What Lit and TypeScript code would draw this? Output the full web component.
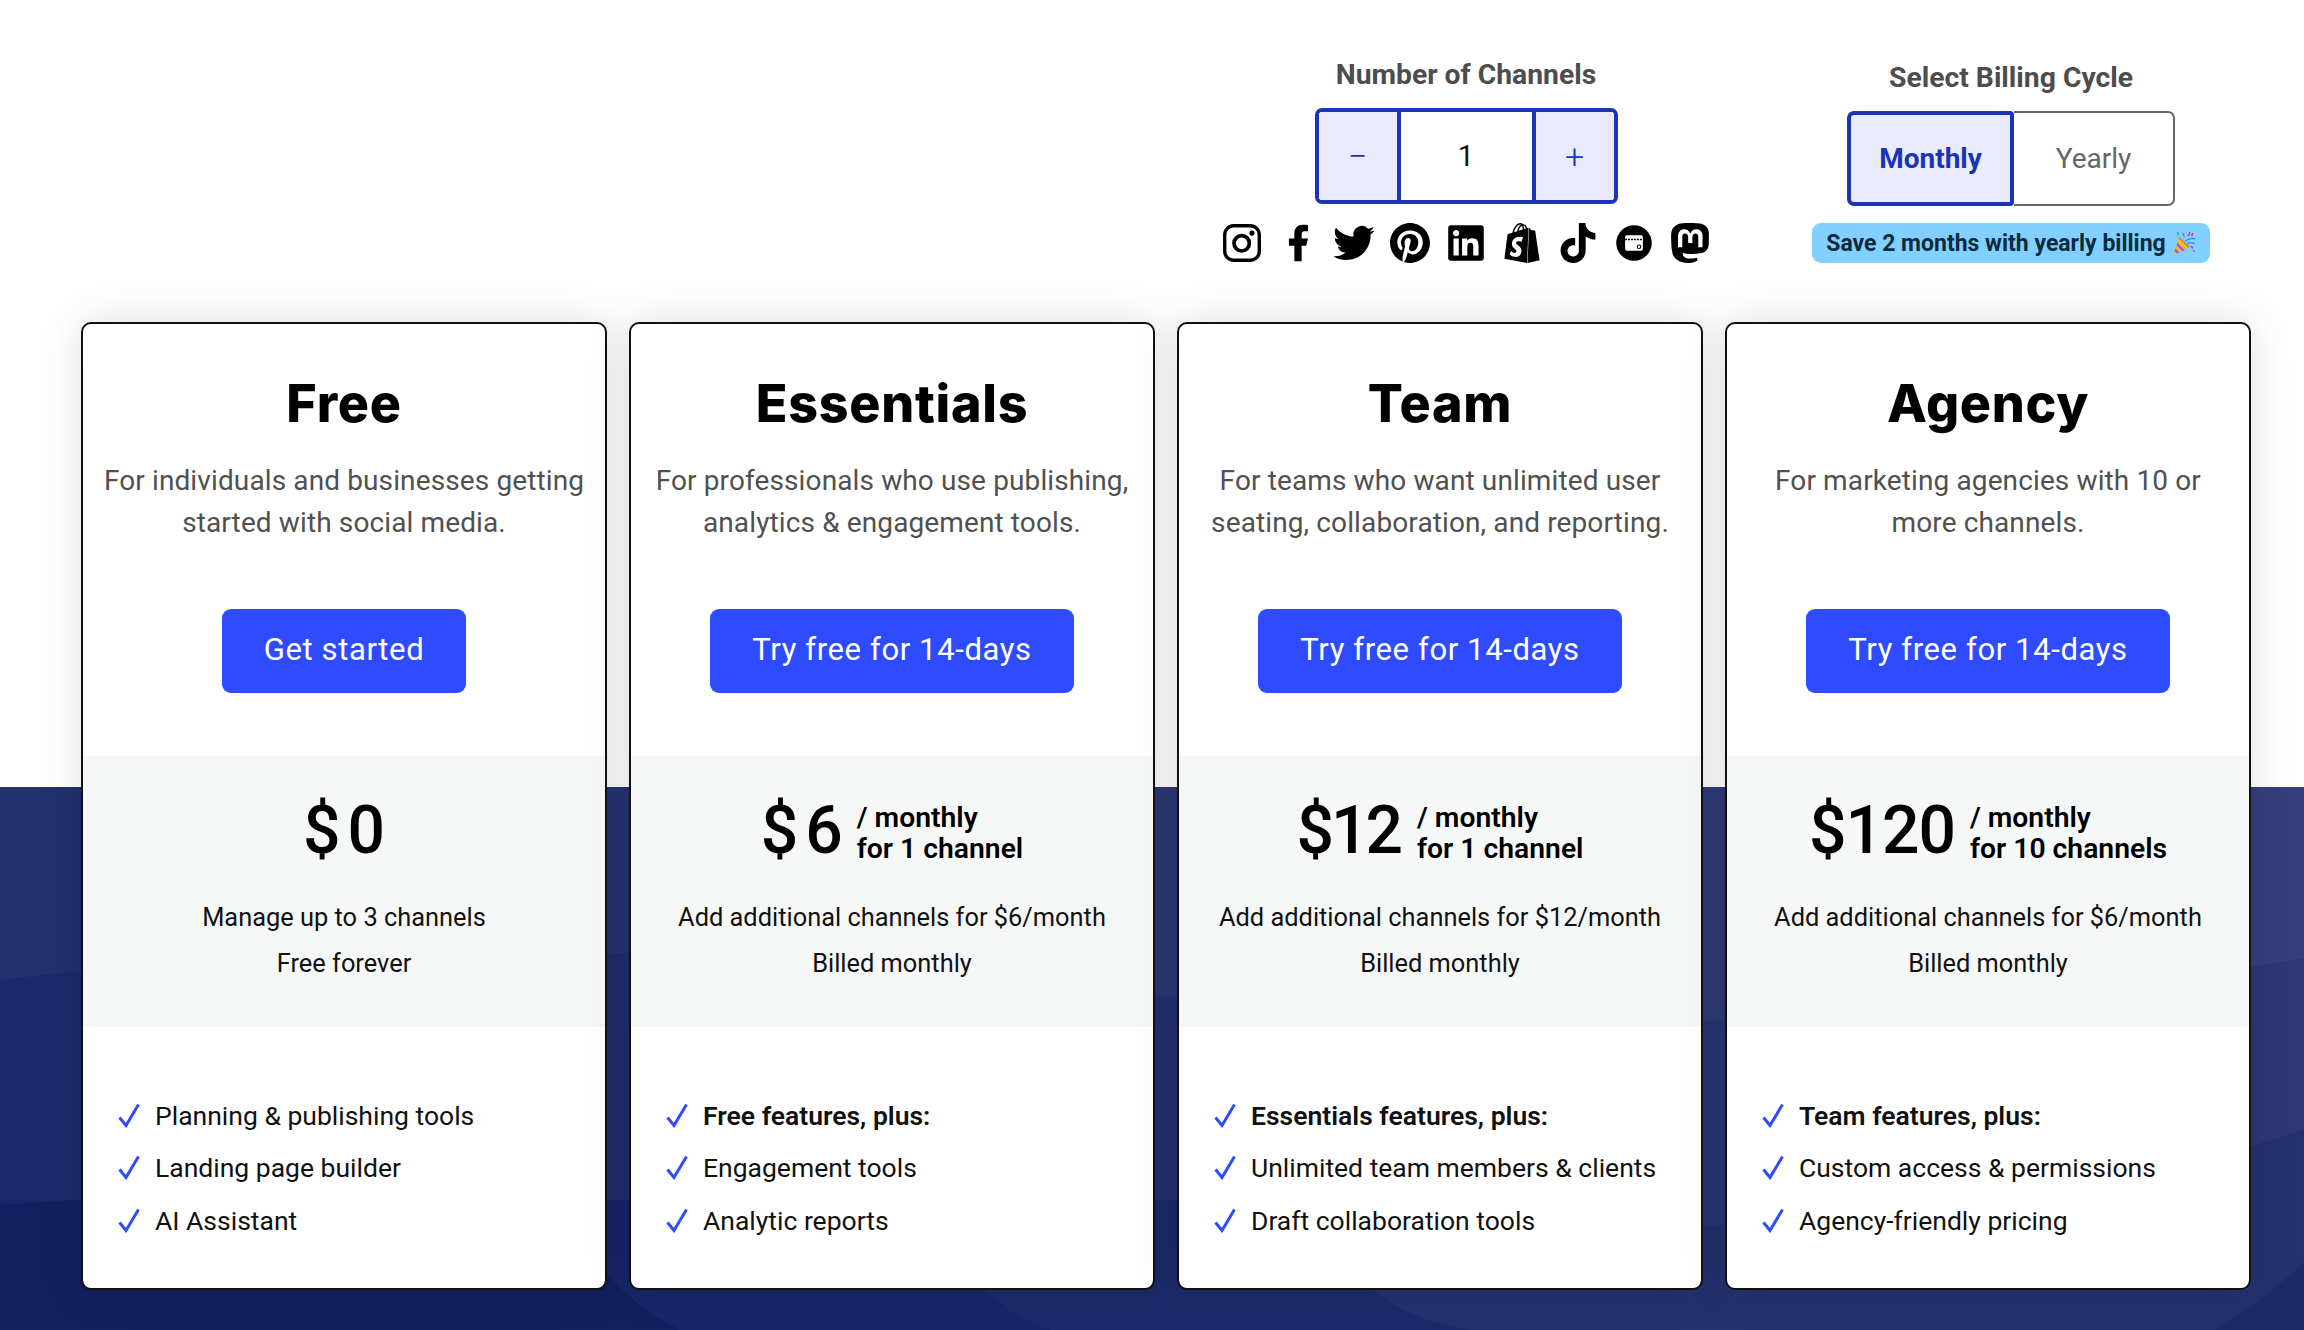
import { LitElement, html, css } from "lit";
import { customElement } from "lit/decorators.js";

const PATHS: Record<string, string> = {
  facebook: "M14 13.5h2.5l1-4H14v-2c0-1.03 0-2 2-2h1.5V2.14c-.326-.043-1.557-.14-2.857-.14C11.928 2 10 3.657 10 6.7v2.8H7v4h3V22h4v-8.5z",
  twitter: "M23.953 4.57a10 10 0 01-2.825.775 4.958 4.958 0 002.163-2.723c-.951.555-2.005.959-3.127 1.184a4.92 4.92 0 00-8.384 4.482C7.69 8.095 4.067 6.13 1.64 3.162a4.822 4.822 0 00-.666 2.475c0 1.71.87 3.213 2.188 4.096a4.904 4.904 0 01-2.228-.616v.06a4.923 4.923 0 003.946 4.827 4.996 4.996 0 01-2.212.085 4.936 4.936 0 004.604 3.417 9.867 9.867 0 01-6.102 2.105c-.39 0-.779-.023-1.17-.067a13.995 13.995 0 007.557 2.209c9.053 0 13.998-7.496 13.998-13.985 0-.21 0-.42-.015-.63A9.935 9.935 0 0024 4.59z",
  pinterest: "M12.017 0C5.396 0 .029 5.367.029 11.987c0 5.079 3.158 9.417 7.618 11.162-.105-.949-.199-2.403.041-3.439.219-.937 1.406-5.957 1.406-5.957s-.359-.72-.359-1.781c0-1.663.967-2.911 2.168-2.911 1.024 0 1.518.769 1.518 1.688 0 1.029-.653 2.567-.992 3.992-.285 1.193.6 2.165 1.775 2.165 2.128 0 3.768-2.245 3.768-5.487 0-2.861-2.063-4.869-5.008-4.869-3.41 0-5.409 2.562-5.409 5.199 0 1.033.394 2.143.889 2.741.099.12.112.225.085.345-.09.375-.293 1.199-.334 1.363-.053.225-.172.271-.401.165-1.495-.69-2.433-2.878-2.433-4.646 0-3.776 2.748-7.252 7.92-7.252 4.158 0 7.392 2.967 7.392 6.923 0 4.135-2.607 7.462-6.233 7.462-1.214 0-2.354-.629-2.758-1.379l-.749 2.848c-.269 1.045-1.004 2.352-1.498 3.146 1.123.345 2.306.535 3.55.535 6.607 0 11.985-5.365 11.985-11.987C23.97 5.39 18.592.026 11.985.026L12.017 0z",
  linkedin: "M20.447 20.452h-3.554v-5.569c0-1.328-.027-3.037-1.852-3.037-1.853 0-2.136 1.445-2.136 2.939v5.667H9.351V9h3.414v1.561h.046c.477-.9 1.637-1.85 3.37-1.85 3.601 0 4.267 2.37 4.267 5.455v6.286zM5.337 7.433c-1.144 0-2.063-.926-2.063-2.065 0-1.138.92-2.063 2.063-2.063 1.14 0 2.064.925 2.064 2.063 0 1.139-.925 2.065-2.064 2.065zm1.782 13.019H3.555V9h3.564v11.452zM22.225 0H1.771C.792 0 0 .774 0 1.729v20.542C0 23.227.792 24 1.771 24h20.451C23.2 24 24 23.227 24 22.271V1.729C24 .774 23.2 0 22.222 0h.003z",
  shopify: "M15.337 23.979l7.216-1.561s-2.604-17.613-2.625-17.73c-.018-.116-.114-.192-.211-.192s-1.929-.136-1.929-.136-1.275-1.274-1.439-1.411c-.045-.037-.075-.057-.121-.074l-.914 21.104h.023zM11.71 11.305s-.81-.424-1.774-.424c-1.447 0-1.504.906-1.504 1.141 0 1.232 3.24 1.715 3.24 4.629 0 2.295-1.44 3.76-3.406 3.76-2.354 0-3.54-1.465-3.54-1.465l.646-2.086s1.245 1.066 2.28 1.066c.675 0 .975-.545.975-.932 0-1.619-2.654-1.694-2.654-4.359-.034-2.237 1.571-4.416 4.827-4.416 1.257 0 1.875.361 1.875.361l-.945 2.715-.02.01zM11.17.83c.136 0 .271.038.405.135-.984.465-2.064 1.639-2.508 3.992-.656.213-1.293.405-1.889.578C7.697 3.75 8.951.84 11.17.84V.83zm1.235 2.949v.135c-.754.232-1.583.484-2.394.736.466-1.777 1.333-2.645 2.085-2.971.193.501.309 1.176.309 2.1zm.539-2.234c.694.074 1.141.867 1.429 1.755-.349.114-.735.231-1.158.366v-.252c0-.752-.096-1.371-.271-1.871v.002zm2.992 1.289c-.02 0-.06.021-.078.021s-.289.075-.714.21c-.423-1.233-1.176-2.37-2.508-2.37h-.115C12.135.209 11.669 0 11.265 0 8.159 0 6.675 3.877 6.21 5.846c-1.194.365-2.063.636-2.16.674-.675.213-.694.232-.772.87-.075.462-1.83 14.063-1.83 14.063L15.009 24l.927-21.166z",
  tiktok: "M12.525.02c1.31-.02 2.61-.01 3.91-.02.08 1.53.63 3.09 1.75 4.17 1.12 1.11 2.7 1.62 4.24 1.79v4.03c-1.44-.05-2.89-.35-4.2-.97-.57-.26-1.1-.59-1.62-.93-.01 2.92.01 5.84-.02 8.75-.08 1.4-.54 2.79-1.35 3.94-1.31 1.92-3.58 3.17-5.91 3.21-1.43.08-2.86-.31-4.08-1.03-2.02-1.19-3.44-3.37-3.65-5.71-.02-.5-.03-1-.01-1.49.18-1.9 1.12-3.72 2.58-4.96 1.66-1.44 3.98-2.13 6.15-1.72.02 1.48-.04 2.96-.04 4.44-.99-.32-2.15-.23-3.02.37-.63.41-1.11 1.04-1.36 1.75-.21.51-.15 1.07-.14 1.61.24 1.64 1.82 3.02 3.5 2.87 1.12-.01 2.19-.66 2.77-1.61.19-.33.4-.67.41-1.06.1-1.79.06-3.57.07-5.36.01-4.03-.01-8.05.02-12.07z",
  mastodon: "M23.268 5.313c-.35-2.578-2.617-4.61-5.304-5.004C17.51.242 15.792 0 11.813 0h-.03c-3.98 0-4.835.242-5.288.309C3.882.692 1.496 2.518.917 5.127.64 6.412.61 7.837.661 9.143c.074 1.874.088 3.745.26 5.611.118 1.24.325 2.47.62 3.68.55 2.237 2.777 4.098 4.96 4.857 2.336.792 4.849.923 7.256.38.265-.061.527-.132.786-.213.585-.184 1.27-.39 1.774-.753a.057.057 0 0 0 .023-.043v-1.809a.052.052 0 0 0-.02-.041.053.053 0 0 0-.046-.01 20.282 20.282 0 0 1-4.709.545c-2.73 0-3.463-1.284-3.674-1.818a5.593 5.593 0 0 1-.319-1.433.053.053 0 0 1 .066-.054c1.517.363 3.072.546 4.632.546.376 0 .75 0 1.125-.01 1.57-.044 3.224-.124 4.768-.422.038-.008.077-.015.11-.024 2.435-.464 4.753-1.92 4.989-5.604.008-.145.03-1.52.03-1.67.002-.512.167-3.63-.024-5.545zm-3.748 9.195h-2.561V8.29c0-1.309-.55-1.976-1.67-1.976-1.23 0-1.846.79-1.846 2.35v3.403h-2.546V8.663c0-1.56-.617-2.35-1.848-2.35-1.112 0-1.668.668-1.67 1.977v6.218H4.822V8.102c0-1.31.337-2.35 1.011-3.12.696-.77 1.608-1.164 2.74-1.164 1.311 0 2.302.5 2.962 1.498l.638 1.06.638-1.06c.66-.999 1.65-1.498 2.96-1.498 1.13 0 2.043.395 2.74 1.164.675.77 1.012 1.81 1.012 3.12z",
};

const pathIcon = (d: string, box = "0 0 24 24") => html`<svg class="ico" viewBox=${box}><path d=${d} fill="#000"></path></svg>`;

const instagram = html`<svg class="ico" viewBox="-.5 -.5 25 25" fill="none" stroke="#000">
  <rect x="1.2" y="1.2" width="21.6" height="21.6" rx="5.6" stroke-width="2.1"></rect>
  <circle cx="11.8" cy="12.2" r="4.8" stroke-width="2.3"></circle>
  <circle cx="18.2" cy="5.8" r="1.6" fill="#000" stroke="none"></circle>
</svg>`;

const gbusiness = html`<svg class="ico" viewBox="-1.500 -1.500 27 27">
  <circle cx="12" cy="12" r="12" fill="#000"></circle>
  <rect x="6" y="6.800" width="12" height="10.400" rx="1.200" fill="#fff"></rect>
  <path d="M6 9.600h12" stroke="#000" stroke-width="1" stroke-dasharray="1.300 .7"></path>
  <circle cx="15.400" cy="14.500" r="1.200" fill="none" stroke="#000" stroke-width=".7"></circle>
</svg>`;

const check = html`<svg class="check" viewBox="0 0 22 25" fill="none"><path d="M1.500 14.500 8 22.500 20.500 1.500" stroke="#2f4bff" stroke-width="3"></path></svg>`;

const popper = html`<svg class="popper" viewBox="0 0 24 24">
  <path d="M1.500 23 7 6.500 17 16.500z" fill="#f9b92e"></path>
  <path d="M3.500 17.500 7.500 21.500 5 22.500 2.500 20zM5.300 11.500 13 19.200 10.500 20.200 4.300 14.300z" fill="#9d5fd0"></path>
  <path d="M7 6.500 17 16.500" stroke="#d4861a" stroke-width="1.600"></path>
  <g fill="none" stroke-width="1.500" stroke-linecap="round">
    <path d="M11 2.500c1 1 .2 1.800 1 2.600M5.500 1.500l1 2.200" stroke="#3f8fee"></path>
    <path d="M16 4.500c1.200-.6 1.800-2 1.500-3M20.500 2.500l-.6 2.200" stroke="#c9408f"></path>
    <path d="M13.500 10c2.500-2.200 5.500-2.800 9-2.200M15.500 12.500c2-.8 4-1 6.500-.3" stroke="#3f8fee"></path>
    <path d="M19 15.500l1.800 1.400M21.500 19.500l.4.4" stroke="#c9408f"></path>
  </g>
</svg>`;

type Plan = {
  name: string; desc: string; cta: string; price: string; track: string;
  suffix?: [string, string]; info: [string, string]; lead?: string; feats: string[];
};

const PLANS: Plan[] = [
  { name: "Free", desc: "For individuals and businesses getting started with social media.", cta: "Get started", price: "0", track: "spaced",
    info: ["Manage up to 3 channels", "Free forever"], feats: ["Planning & publishing tools", "Landing page builder", "AI Assistant"] },
  { name: "Essentials", desc: "For professionals who use publishing, analytics & engagement tools.", cta: "Try free for 14-days", price: "6", track: "spaced",
    suffix: ["/ monthly", "for 1 channel"], info: ["Add additional channels for $6/month", "Billed monthly"], lead: "Free features, plus:", feats: ["Engagement tools", "Analytic reports"] },
  { name: "Team", desc: "For teams who want unlimited user seating, collaboration, and reporting.", cta: "Try free for 14-days", price: "12", track: "tight",
    suffix: ["/ monthly", "for 1 channel"], info: ["Add additional channels for $12/month", "Billed monthly"], lead: "Essentials features, plus:", feats: ["Unlimited team members & clients", "Draft collaboration tools"] },
  { name: "Agency", desc: "For marketing agencies with 10 or more channels.", cta: "Try free for 14-days", price: "120", track: "snug",
    suffix: ["/ monthly", "for 10 channels"], info: ["Add additional channels for $6/month", "Billed monthly"], lead: "Team features, plus:", feats: ["Custom access & permissions", "Agency-friendly pricing"] },
];

@customElement("app-root")
export class AppRoot extends LitElement {
  static styles = css`
    :host {
      display: block;
      position: relative;
      width: 2304px;
      height: 1330px;
      overflow: hidden;
      background: #fff;
      font-family: Roboto, "Liberation Sans", sans-serif;
    }
    .navy { position: absolute; left: 0; top: 787px; width: 2304px; height: 543px; display: block; }
    .page { position: relative; display: flex; flex-direction: column; }
    .top {
      display: flex; justify-content: flex-end; gap: 102px;
      padding: 58px 94px 0 0; height: 264px; box-sizing: border-box;
    }
    .ctl { display: flex; flex-direction: column; align-items: center; }
    .billing { padding-top: 3px; width: 398px; }
    .label { font-size: 28.3px; line-height: 34px; font-weight: 700; color: #4d4d4d; }
    .stepper {
      margin-top: 16px; display: grid; grid-template-columns: 82px 131px 82px;
      width: 303px; height: 96px; box-sizing: border-box;
      border: 4px solid #1c33b5; border-radius: 7px; overflow: hidden;
    }
    .stepper span { display: flex; align-items: center; justify-content: center; font-size: 29px; color: #111; background: #fff; }
    .stepper .sb { background: #e9ebfc; color: #1c33b5; font-size: 34px; font-weight: 300; }
    .stepper .sb:first-child { border-right: 4px solid #1c33b5; }
    .stepper .sb:last-child { border-left: 4px solid #1c33b5; }
    .icons { margin-top: 19px; display: flex; align-items: center; gap: 16px; }
    .ico { width: 40px; height: 40px; display: block; }
    .toggle { margin-top: 16px; display: grid; grid-template-columns: 167px 161px; width: 328px; height: 95px; }
    .toggle span { display: flex; align-items: center; justify-content: center; font-size: 28px; box-sizing: border-box; }
    .on { background: #eaebfc; border: 4px solid #1c33b5; border-radius: 7px 4px 4px 7px; color: #1c33b5; font-weight: 700; }
    .off { border: 2px solid #666; border-left: 0; border-radius: 0 7px 7px 0; color: #666; }
    .badge {
      margin-top: 17px; width: 398px; height: 40px; box-sizing: border-box; background: #82d0ff; border-radius: 9px;
      display: flex; align-items: center; justify-content: center; gap: 6px;
      font-size: 23px; font-weight: 700; color: #0c2a3e;
    }
    .popper { width: 24px; height: 24px; display: block; }
    .cards {
      display: grid; grid-template-columns: repeat(4, 526px); gap: 22px;
      padding: 58px 0 0 81px;
    }
    .card {
      background: #fff; border: 2px solid #111; border-radius: 10px; box-sizing: border-box;
      height: 968px; box-shadow: 0 0 44px rgba(0, 0, 0, .13);
      display: flex; flex-direction: column; position: relative;
    }
    .head { padding: 50px 20px 63px; display: flex; flex-direction: column; align-items: center; text-align: center; }
    h2 { margin: 0; font-family: Inter, sans-serif; font-weight: 800; font-size: 52px; letter-spacing: .7px; line-height: 60px; color: #000; }
    .desc { margin: 26px 0 0; font-size: 28px; letter-spacing: .12px; line-height: 42px; color: #505050; font-weight: 400; }
    .cta {
      margin-top: 65px; height: 84px; padding: 0 42px 3px; box-sizing: border-box; display: flex; align-items: center; justify-content: center;
      background: #2f4bff; border-radius: 9px; color: #fff; font-size: 31px; letter-spacing: .62px;
    }
    .band { background: #f6f8f8; height: 271px; padding-top: 38px; box-sizing: border-box; text-align: center; }
    .price { height: 74px; display: flex; align-items: center; justify-content: center; gap: 14px; color: #000; }
    .amt { font-size: 66px; line-height: 74px; font-weight: 500; }
    .amt i { font-style: normal; }
    .amt.spaced i { margin-left: 7px; }
    .amt.tight { letter-spacing: -3px; margin-right: 3px; }
    .amt.snug { letter-spacing: -1px; margin-right: 1px; }
    .sfx { font-size: 28.3px; line-height: 31px; font-weight: 600; text-align: left; margin-top: 4px; }
    .info { margin-top: 27px; font-size: 25.4px; line-height: 45.5px; color: #111; }
    .feats { list-style: none; margin: 0; padding: 62px 0 0 35px; }
    .feats li { height: 52.5px; display: flex; align-items: center; gap: 15px; font-size: 26.5px; color: #111; }
    .feats b { font-weight: 600; }
    .check { width: 22px; height: 25px; flex: none; }
  `;

  render() {
    return html`
      <svg class="navy" viewBox="0 787 2304 543" aria-hidden="true">
        <defs>
          <linearGradient id="ga"><stop offset="0" stop-color="#21306f"></stop><stop offset="1" stop-color="#363f7d"></stop></linearGradient>
          <linearGradient id="gb"><stop offset="0" stop-color="#1c2a6c"></stop><stop offset="1" stop-color="#2e3877"></stop></linearGradient>
        </defs>
        <rect x="0" y="787" width="2304" height="543" fill="url(#ga)"></rect>
        <path d="M0 980C400 930 800 950 1200 1000S2000 1010 2304 958V1330H0z" fill="url(#gb)"></path>
        <path d="M0 1205C500 1170 900 1230 1400 1230S2050 1210 2304 1130V1330H0z" fill="#25316f"></path>
        <path d="M0 1200H1300C1340 1280 1400 1320 1470 1330H0z" fill="#1c2b6b"></path>
        <path d="M0 1200H920C950 1270 1000 1310 1050 1330H0z" fill="#182769"></path>
        <path d="M0 1205C200 1190 400 1190 560 1200C600 1280 640 1310 680 1330H0z" fill="#132060"></path>
        <path d="M2304 1262C2270 1295 2240 1315 2215 1330H2304z" fill="#1f2a6a"></path>
      </svg>
      <div class="page">
        <div class="top">
          <div class="ctl">
            <div class="label">Number of Channels</div>
            <div class="stepper"><span class="sb">−</span><span>1</span><span class="sb">+</span></div>
            <div class="icons">
              ${instagram}
              ${pathIcon(PATHS.facebook, "1 1 22 22")}
              ${pathIcon(PATHS.twitter, ".5 .5 23 23")}
              ${pathIcon(PATHS.pinterest)}
              ${pathIcon(PATHS.linkedin, "-1.500 -1.500 27 27")}
              ${pathIcon(PATHS.shopify)}
              ${pathIcon(PATHS.tiktok)}
              ${gbusiness}
              ${pathIcon(PATHS.mastodon)}
            </div>
          </div>
          <div class="ctl billing">
            <div class="label">Select Billing Cycle</div>
            <div class="toggle"><span class="on">Monthly</span><span class="off">Yearly</span></div>
            <div class="badge">Save 2 months with yearly billing ${popper}</div>
          </div>
        </div>
        <div class="cards">
          ${PLANS.map((p) => html`
            <div class="card">
              <div class="head">
                <h2>${p.name}</h2>
                <p class="desc">${p.desc}</p>
                <div class="cta">${p.cta}</div>
              </div>
              <div class="band">
                <div class="price">
                  <div class="amt ${p.track}">$<i>${p.price}</i></div>
                  ${p.suffix ? html`<div class="sfx">${p.suffix[0]}<br />${p.suffix[1]}</div>` : ""}
                </div>
                <div class="info">${p.info[0]}<br />${p.info[1]}</div>
              </div>
              <ul class="feats">
                ${p.lead ? html`<li>${check}<b>${p.lead}</b></li>` : ""}
                ${p.feats.map((f) => html`<li>${check}<span>${f}</span></li>`)}
              </ul>
            </div>
          `)}
        </div>
      </div>
    `;
  }
}
